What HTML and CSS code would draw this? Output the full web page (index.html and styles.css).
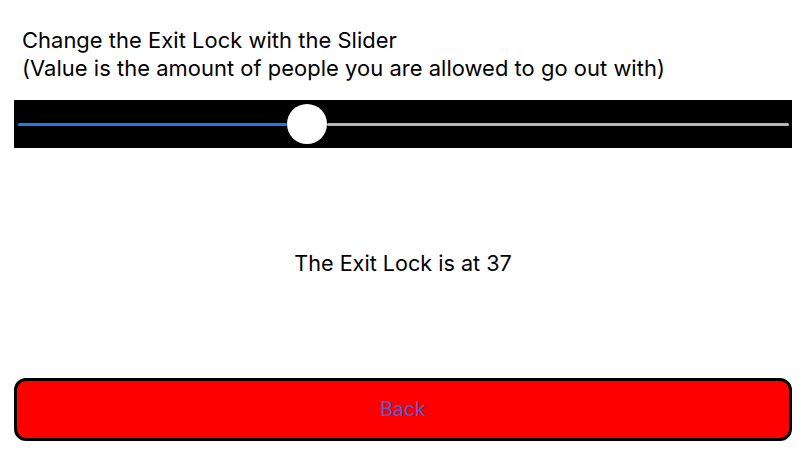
FILE: index.html
```html
<!DOCTYPE html>
<html>
<head>
<meta charset="utf-8">
<link rel="stylesheet" href="styles.css">
</head>
<body>
<div class="page">
  <div class="title">Change the Exit Lock with the Slider<br>(Value is the amount of people you are allowed to go out with)</div>
  <div class="slider">
    <div class="track">
      <div class="fill"></div>
      <div class="thumb"></div>
      <div class="rest"></div>
    </div>
  </div>
  <div class="value">The Exit Lock is at 37</div>
  <div class="button">Back</div>
</div>
</body>
</html>
```
FILE: styles.css
```css
html, body {
  margin: 0;
  padding: 0;
  background: #fff;
}
.page {
  width: 806px;
  height: 454px;
  display: flex;
  flex-direction: column;
  font-family: Inter, "Liberation Sans", Arial, sans-serif;
  color: #000;
}
.title {
  font-size: 21.9px;
  line-height: 28px;
  padding: 26px 0 0 22px;
  height: 74px;
  box-sizing: border-box;
  letter-spacing: 0.05px;
}
.slider {
  margin: 26px 14px 0 14px;
  height: 48px;
  background: #000;
  display: flex;
  align-items: center;
  padding: 0 3px 0 4px;
}
.track {
  flex: 1;
  display: flex;
  align-items: center;
}
.fill {
  width: 269px;
  height: 3px;
  background: #2277ea;
  border-radius: 2px;
}
.thumb {
  width: 40px;
  height: 40px;
  border-radius: 50%;
  background: #fff;
  flex: none;
}
.rest {
  flex: 1;
  height: 3px;
  background: #b8b8b8;
  border-radius: 2px;
}
.value {
  text-align: center;
  font-size: 21.6px;
  margin-top: 102px;
  height: 26px;
  line-height: 26px;
}
.button {
  margin: 102px 14px 0 14px;
  height: 63px;
  box-sizing: border-box;
  border: 3px solid #000;
  border-radius: 12px;
  background: #ff0000;
  color: #4c5fd0;
  font-size: 19.5px;
  display: flex;
  align-items: center;
  justify-content: center;
  padding-bottom: 2px;
}
```
